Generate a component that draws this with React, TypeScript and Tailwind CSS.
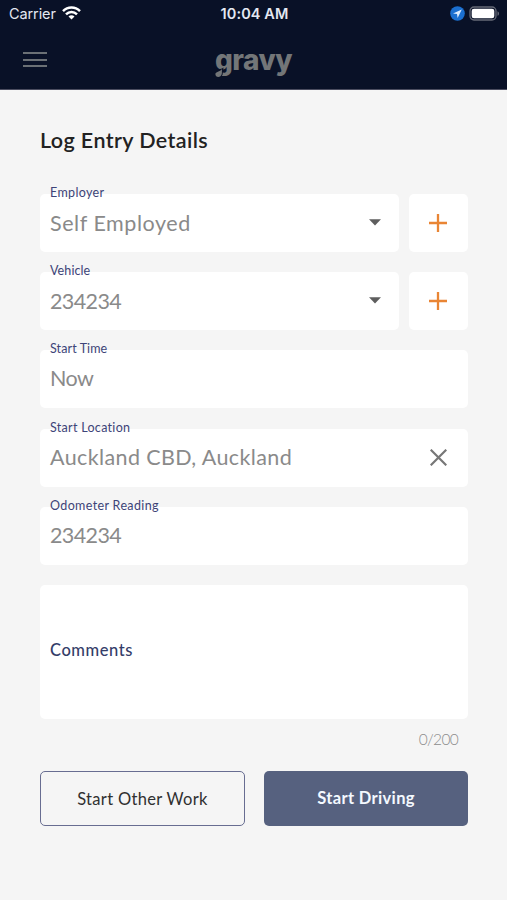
import type { ReactNode } from 'react';

function StatusBar() {
  return (
    <div className="flex h-[28px] items-center justify-between pl-[9px] pr-[7px] font-['Inter','Liberation_Sans',sans-serif] text-[#e4e8f2]">
      <div className="flex w-[120px] items-center gap-[6px]">
        <span className="text-[14.5px] leading-[18px] tracking-[-0.1px]">Carrier</span>
        <svg className="-mt-[2px]" width="19" height="14" viewBox="0 0 19 14" fill="none" stroke="#fff" strokeWidth="2.5">
          <path d="M1 5.1C5.8.3 13.2.3 18 5.1" />
          <path d="M4 8.3c3.1-3.1 7.9-3.1 11 0" />
          <path d="M6.5 10.5c1.7-1.6 4.3-1.6 6 0l-3 3z" fill="#fff" stroke="none" />
        </svg>
      </div>
      <span className="text-[14.5px] font-semibold leading-[18px] tracking-[0.1px]">10:04 AM</span>
      <div className="-mt-[2px] flex w-[120px] items-center justify-end gap-[4px]">
        <svg width="15" height="15" viewBox="0 0 15 15">
          <circle cx="7.5" cy="7.5" r="7.3" fill="#1b6fd0" />
          <path d="M11.8 3.4 3 7.4l4 .7.6 4z" fill="#dcecff" />
        </svg>
        <svg width="31" height="15" viewBox="0 0 31 15">
          <rect x="1" y="1" width="26" height="13" rx="4" fill="none" stroke="#666a77" strokeWidth="1.3" />
          <rect x="2.7" y="2.7" width="22.6" height="9.6" rx="2.3" fill="#fff" />
          <path d="M28.5 5.2c2 .8 2 3.8 0 4.6z" fill="#666a77" />
        </svg>
      </div>
    </div>
  );
}

function Header() {
  return (
    <header className="h-[90px] border-b border-[#4b4d60] bg-[#091127]">
      <StatusBar />
      <div className="flex h-[61px] items-center justify-between px-[23px]">
        <div className="flex w-6 flex-col gap-[4.5px] pt-[2px]">
          <span className="h-[2px] bg-[#6b7075]" />
          <span className="h-[2px] bg-[#6b7075]" />
          <span className="h-[2px] bg-[#6b7075]" />
        </div>
        <div className="relative pt-[2px] font-['Inter',sans-serif] text-[28px] font-extrabold leading-[28px] tracking-[-0.5px] text-[#737678]">
          gravy
          <svg className="absolute -left-[1px] top-[22px]" width="12" height="13" viewBox="0 0 12 13">
            <path d="M0 1.500C3 4 7 3.500 9.500 1.500L8.500 9 5 13H0z" fill="#091127" />
            <path d="M8 3C7.700 4.500 8.200 6.500 7.700 8.300 7.200 9.900 5.900 11 4.300 11 2.600 11 1.400 9.800 1.400 8.200 1.400 5.500 5.900 6 8 3Z" fill="#737678" />
          </svg>
        </div>
        <div className="w-6" />
      </div>
    </header>
  );
}

type FieldProps = { label: string; labelClass: string; value: string; valueClass: string; children?: ReactNode };

function Field({ label, labelClass, value, valueClass, children }: FieldProps) {
  return (
    <div className="flex h-[58px] min-w-0 flex-1 items-center justify-between rounded-[5px] bg-white pl-[10px]">
      <div className="flex h-full flex-col">
        <span className={`-mt-[8px] whitespace-nowrap text-[12.5px] leading-[14px] text-[#3d4478] ${labelClass}`}>{label}</span>
        <span className={`whitespace-nowrap text-[21.500px] leading-[26px] text-[#8a8a8a] ${valueClass}`}>{value}</span>
      </div>
      {children}
    </div>
  );
}

function Caret() {
  return (
    <svg className="mr-[18px] -mt-[1px]" width="12" height="7" viewBox="0 0 12 7">
      <path d="M0 .3h12L6 6.600z" fill="#5e5e5e" />
    </svg>
  );
}

function AddButton() {
  return (
    <button className="flex h-[58px] w-[59px] items-center justify-center rounded-[5px] bg-white pr-px">
      <svg width="18" height="18" viewBox="0 0 18 18" stroke="#e98534" strokeWidth="2.300">
        <path d="M9 0v18M0 9h18" />
      </svg>
    </button>
  );
}

export default function App() {
  return (
    <div className="h-[900px] w-[507px] overflow-hidden bg-[#f5f5f5] font-['Lato','Liberation_Sans',sans-serif]">
      <Header />
      <main className="pl-[40px] pr-[39px] pt-[37px]">
        <h1 className="h-[27px] whitespace-nowrap text-[21.5px] font-semibold leading-[27px] tracking-[0.4px] text-[#222]"><span>Log Entry Details</span></h1>
        <div className="mt-[40px] flex flex-col gap-[20.200px]">
          <div className="flex gap-[10px]">
            <Field label="Employer" labelClass="tracking-[0.35px]" value="Self Employed" valueClass="mt-[10px] tracking-[0.55px]"><Caret /></Field>
            <AddButton />
          </div>
          <div className="flex gap-[10px]">
            <Field label="Vehicle" labelClass="tracking-[0.1px]" value="234234" valueClass="mt-[10px] tracking-[-0.6px]"><Caret /></Field>
            <AddButton />
          </div>
          <div className="flex">
            <Field label="Start Time" labelClass="tracking-[0.1px]" value="Now" valueClass="mt-[9px] tracking-[-0.6px]" />
          </div>
          <div className="flex">
            <Field label="Start Location" labelClass="tracking-[0.3px]" value="Auckland CBD, Auckland" valueClass="mt-[9px] tracking-[0.38px]">
              <svg className="mr-[21px]" width="17" height="17" viewBox="0 0 17 17" stroke="#777" strokeWidth="2.200">
                <path d="m.7.700 15.600 15.600M16.300.7.700 16.300" />
              </svg>
            </Field>
          </div>
          <div className="flex">
            <Field label="Odometer Reading" labelClass="tracking-[0.36px]" value="234234" valueClass="mt-[9px] tracking-[-0.6px]" />
          </div>
          <div className="flex h-[134px] items-center rounded-[5px] bg-white pb-[3px] pl-[10px] text-[16.500px] font-medium tracking-[0.55px] text-[#343d69]">
            <span>Comments</span>
          </div>
        </div>
        <div className="mt-[11px] flex h-[20px] items-center justify-end pr-[10px] text-[15.5px] font-light tracking-[-0.7px] text-[#8c8c8c]"><span>0/200</span></div>
        <div className="mt-[21px] flex gap-[19px]">
          <button className="h-[55px] w-[205px] rounded-[5px] border border-[#686d91] pt-[2px] text-[16.500px] tracking-[0.33px] text-[#303030]"><span>Start Other Work</span></button>
          <button className="h-[55px] flex-1 rounded-[5px] bg-[#56617f] pb-[1px] text-[16.500px] font-bold tracking-[0.35px] text-[#f4f9ff]"><span>Start Driving</span></button>
        </div>
      </main>
    </div>
  );
}
